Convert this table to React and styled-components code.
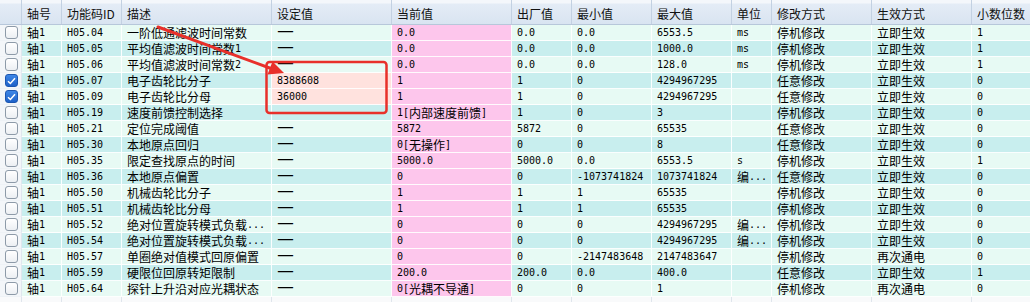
import React from 'react';
import styled, { createGlobalStyle, css } from 'styled-components';

const COLS = '22px 40px 60px 150px 120px 120px 60px 80px 80px 40px 100px 100px 80px';

const Global = createGlobalStyle`
  html, body { margin: 0; padding: 0; background: #f6f8fa; }
  body {
    font-family: "Noto Sans CJK SC", "DejaVu Sans", sans-serif;
    font-size: 12px;
    color: #000;
  }
`;

const Frame = styled.div`
  position: relative;
  width: 1030px;
  height: 302px;
  overflow: hidden;
  background: #f8fafc;
`;

const Table = styled.div`
  display: flex;
  flex-direction: column;
  width: max-content;
`;

const HeaderRow = styled.div`
  display: grid;
  grid-template-columns: ${COLS};
  height: 25px;
  background: linear-gradient(#f4f7fb 0px, #f4f7fb 3px, #e4ecf6 4px, #d9e4f1 100%);
  border-bottom: 1px solid #b7c7da;
  box-sizing: border-box;
`;

const HeaderCell = styled.div`
  display: flex;
  align-items: center;
  padding: 2px 0 0 5px;
  border-right: 1px solid #c3d1e2;
  white-space: nowrap;
  overflow: hidden;
  box-sizing: border-box;
  font-size: 12px;
  color: #111;
`;

const Row = styled.div`
  display: grid;
  grid-template-columns: ${COLS};
  height: 16px;
`;

const tones = {
  light: '#e7faf4',
  dark: '#c8eeee',
  pink: '#fdc6ec',
  sel: '#ffe2de',
  box: '#f3f6f9',
};

const Cell = styled.div`
  display: flex;
  align-items: center;
  padding-left: 5px;
  background: ${(p) => tones[p.$tone]};
  border-right: 1px solid rgba(255, 255, 255, 0.9);
  border-bottom: 1px solid rgba(255, 255, 255, 0.9);
  white-space: nowrap;
  overflow: hidden;
  box-sizing: border-box;
  line-height: 15px;
  ${(p) =>
    p.$box &&
    css`
      border-right: 1px solid #dfe6ee;
      border-bottom: 1px solid #eef2f6;
    `}
`;

const FillerCell = styled.div`
  height: 12px;
  border-right: 1px solid #dfe5ec;
  background: #f9fafb;
`;

const Latin = styled.span`
  font-family: "DejaVu Sans Mono", "Liberation Mono", monospace;
  font-size: 10px;
`;

const Dash = styled.span`
  font-family: "Noto Sans CJK SC", sans-serif;
  font-size: 19px;
  line-height: 15px;
  height: 15px;
  display: inline-block;
  transform: translateY(-4px);
`;

const Box = styled.span`
  width: 13px;
  height: 13px;
  box-sizing: border-box;
  border-radius: 3px;
  display: inline-flex;
  align-items: center;
  justify-content: center;
  ${(p) =>
    p.$checked
      ? css`
          background: linear-gradient(#3d86e6, #1f62c9);
          border: 1px solid #1c56b0;
        `
      : css`
          background: linear-gradient(#ffffff, #eceff3);
          border: 1px solid #8d9aa8;
        `}
`;

const Overlay = styled.svg`
  position: absolute;
  left: 0;
  top: 0;
  pointer-events: none;
`;

function Txt({ children }) {
  if (children === '—') return <Dash>—</Dash>;
  const parts = String(children).split(/([\x20-\x7e]+)/).filter((s) => s !== '');
  return (
    <>
      {parts.map((s, i) =>
        /^[\x20-\x7e]+$/.test(s) ? <Latin key={i}>{s}</Latin> : <span key={i}>{s}</span>
      )}
    </>
  );
}

const headers = ['', '轴号', '功能码ID', '描述', '设定值', '当前值', '出厂值', '最小值', '最大值', '单位', '修改方式', '生效方式', '小数位数'];

const D = '—';
const rows = [
  [0, 'H05.04', '一阶低通滤波时间常数', D, '0.0', '0.0', '0.0', '6553.5', 'ms', '停机修改', '立即生效', '1'],
  [0, 'H05.05', '平均值滤波时间常数1', D, '0.0', '0.0', '0.0', '1000.0', 'ms', '停机修改', '立即生效', '1'],
  [0, 'H05.06', '平均值滤波时间常数2', D, '0.0', '0.0', '0.0', '128.0', 'ms', '停机修改', '立即生效', '1'],
  [1, 'H05.07', '电子齿轮比分子', '8388608', '1', '1', '0', '4294967295', '', '任意修改', '立即生效', '0'],
  [1, 'H05.09', '电子齿轮比分母', '36000', '1', '1', '0', '4294967295', '', '任意修改', '立即生效', '0'],
  [0, 'H05.19', '速度前馈控制选择', '', '1[内部速度前馈]', '1', '0', '3', '', '停机修改', '立即生效', '0'],
  [0, 'H05.21', '定位完成阈值', D, '5872', '5872', '0', '65535', '', '任意修改', '立即生效', '0'],
  [0, 'H05.30', '本地原点回归', D, '0[无操作]', '0', '0', '8', '', '任意修改', '立即生效', '0'],
  [0, 'H05.35', '限定查找原点的时间', D, '5000.0', '5000.0', '0.0', '6553.5', 's', '停机修改', '立即生效', '1'],
  [0, 'H05.36', '本地原点偏置', D, '0', '0', '-1073741824', '1073741824', '编...', '任意修改', '立即生效', '0'],
  [0, 'H05.50', '机械齿轮比分子', D, '1', '1', '1', '65535', '', '停机修改', '立即生效', '0'],
  [0, 'H05.51', '机械齿轮比分母', D, '1', '1', '1', '65535', '', '停机修改', '立即生效', '0'],
  [0, 'H05.52', '绝对位置旋转模式负载...', D, '0', '0', '0', '4294967295', '编...', '停机修改', '立即生效', '0'],
  [0, 'H05.54', '绝对位置旋转模式负载...', D, '0', '0', '0', '4294967295', '编...', '停机修改', '立即生效', '0'],
  [0, 'H05.57', '单圈绝对值模式回原偏置', D, '0', '0', '-2147483648', '2147483647', '', '停机修改', '再次通电', '0'],
  [0, 'H05.59', '硬限位回原转矩限制', D, '200.0', '200.0', '0.0', '400.0', '', '任意修改', '立即生效', '1'],
  [0, 'H05.64', '探针上升沿对应光耦状态', D, '0[光耦不导通]', '0', '0', '1', '', '停机修改', '再次通电', '0'],
];

export default function App() {
  return (
    <Frame>
      <Global />
      <Table>
        <HeaderRow>
          {headers.map((h, i) => (
            <HeaderCell key={i}>{h}</HeaderCell>
          ))}
        </HeaderRow>
        {rows.map((r, ri) => {
          const base = ri % 2 === 0 ? 'light' : 'dark';
          const [checked, code, desc, setv, cur, fac, min, max, unit, mod, eff, dec] = r;
          return (
            <Row key={ri}>
              <Cell $tone="box" $box>
                <Box $checked={!!checked}>
                  {checked ? (
                    <svg width="9" height="8" viewBox="0 0 9 8">
                      <polyline points="1,4.2 3.4,6.5 8,1.2" fill="none" stroke="#fff" strokeWidth="1.5" />
                    </svg>
                  ) : null}
                </Box>
              </Cell>
              <Cell $tone={base}><Txt>轴1</Txt></Cell>
              <Cell $tone={base}><Txt>{code}</Txt></Cell>
              <Cell $tone={base}><Txt>{desc}</Txt></Cell>
              <Cell $tone={checked ? 'sel' : base}>{setv ? <Txt>{setv}</Txt> : null}</Cell>
              <Cell $tone="pink"><Txt>{cur}</Txt></Cell>
              <Cell $tone={base}><Txt>{fac}</Txt></Cell>
              <Cell $tone={base}><Txt>{min}</Txt></Cell>
              <Cell $tone={base}><Txt>{max}</Txt></Cell>
              <Cell $tone={base}>{unit ? <Txt>{unit}</Txt> : null}</Cell>
              <Cell $tone={base}><Txt>{mod}</Txt></Cell>
              <Cell $tone={base}><Txt>{eff}</Txt></Cell>
              <Cell $tone={base}><Txt>{dec}</Txt></Cell>
            </Row>
          );
        })}
        <Row>
          {headers.map((_, i) => (
            <FillerCell key={i} />
          ))}
        </Row>
      </Table>
      <Overlay width="1030" height="302" viewBox="0 0 1030 302">
        <line x1="158" y1="27" x2="271" y2="68.5" stroke="#e8302a" strokeWidth="3" strokeLinecap="round" />
        <polygon points="284,73 267.5,74.5 272.5,61.5" fill="#e8302a" />
        <rect x="266.5" y="62" width="120" height="51" rx="3" ry="3" fill="none" stroke="#e8302a" strokeWidth="2.5" />
      </Overlay>
    </Frame>
  );
}
